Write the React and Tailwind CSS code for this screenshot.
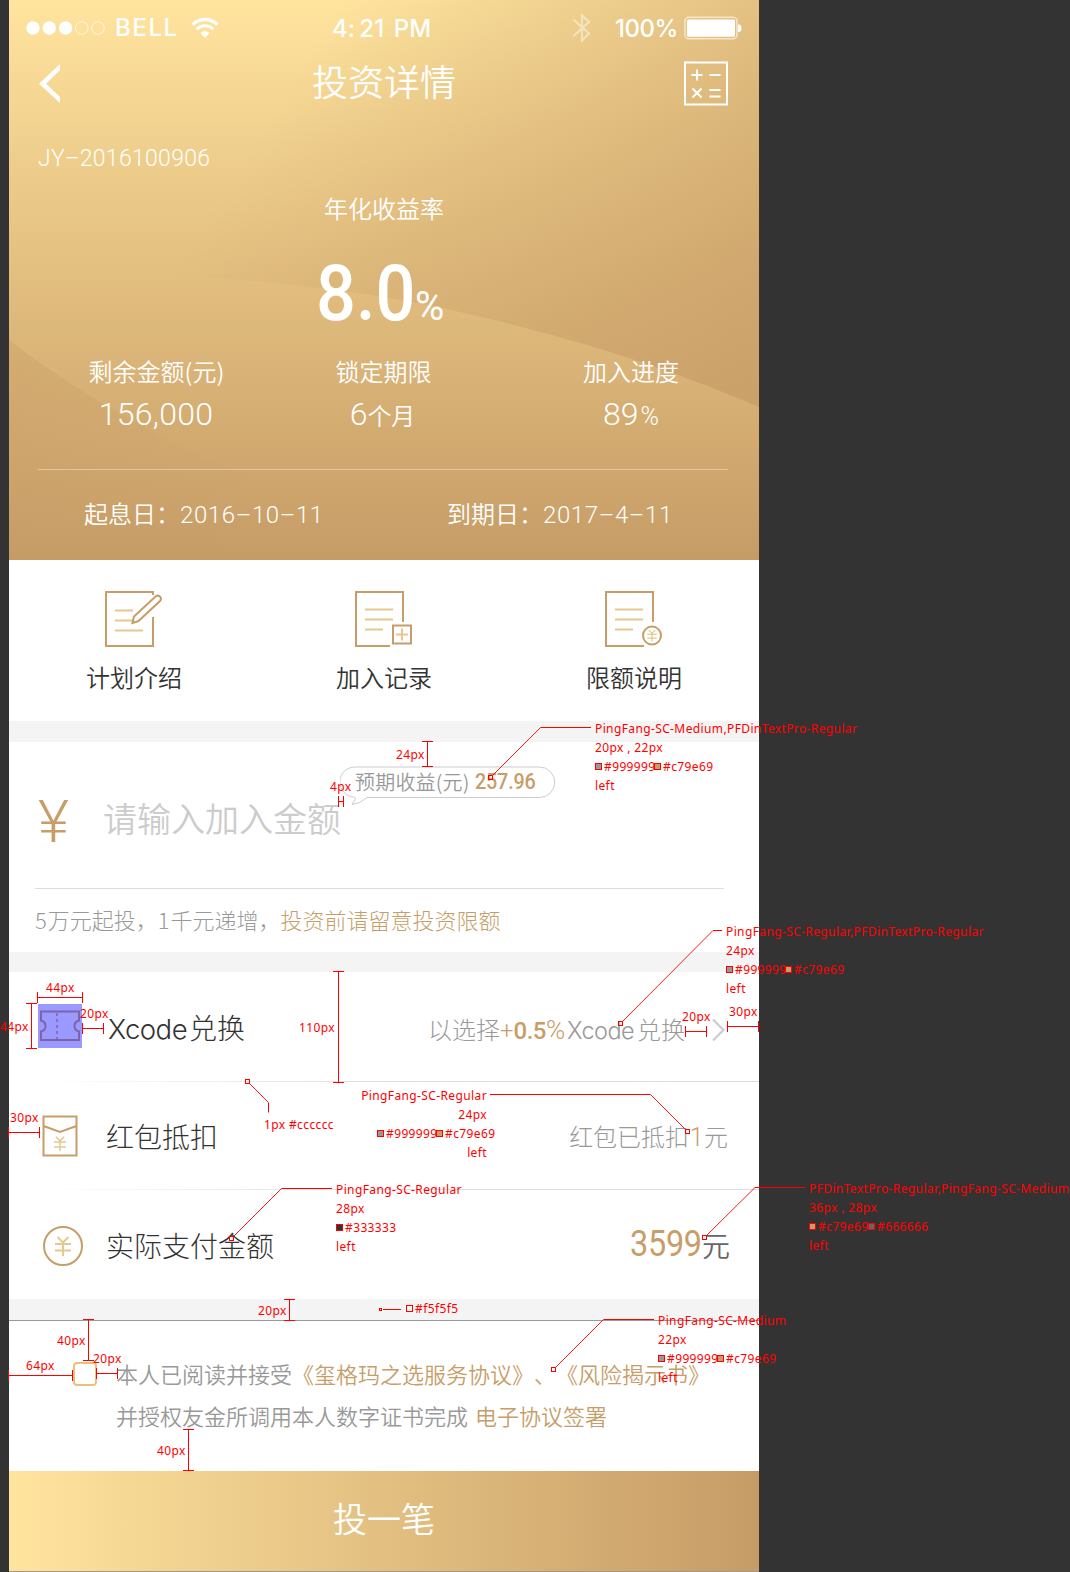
import React from "react";

const GOLD = "#c79e69";
const PALE = "#e5c88f";

const Num = ({ className = "", children }) => (
  <span className={`font-[Roboto,sans-serif] ${className}`}>{children}</span>
);

function StatusBar() {
  return (
    <div className="flex h-[56px] items-center font-[Inter,sans-serif] text-[24px] leading-[30px] font-[450]">
      <svg className="ml-[17px] h-[14px] w-[80px] shrink-0" viewBox="0 0 80 14" fill="none">
        <circle cx="7" cy="7" r="6.7" fill="#fff" />
        <circle cx="23.3" cy="7" r="6.7" fill="#fff" />
        <circle cx="39.6" cy="7" r="6.7" fill="#fff" />
        <circle cx="55.8" cy="7" r="6.3" stroke="#fff" strokeOpacity=".75" />
        <circle cx="72" cy="7" r="6.3" stroke="#fff" strokeOpacity=".75" />
      </svg>
      <span className="ml-[8px] w-[77px] shrink-0 pl-px tracking-[1.6px]">BELL</span>
      <svg className="h-[22px] w-[28px] shrink-0" viewBox="0 0 28 22" fill="none">
        <path d="M1.5 7.6C8.5.8 19.500.8 26.500 7.600" stroke="#fff" strokeWidth="3.4" />
        <path d="M5.800 12.200c4.600-4.600 11.800-4.600 16.400 0" stroke="#fff" strokeWidth="3.200" />
        <path d="M9.300 16c2.700-2.500 6.700-2.500 9.400 0L14 20.800z" fill="#fff" />
      </svg>
      <span className="ml-[112px] w-[101px] shrink-0 pt-[2px] pl-px tracking-[0.1px] whitespace-nowrap">4<span className="mr-[4px]">:</span>21<span className="ml-[3px]"> PM</span></span>
      <svg className="ml-[140px] h-[30px] w-[20px] shrink-0 opacity-45" viewBox="0 0 20 30" fill="none">
        <path d="M1.500 6.500 17 20.500 10 27.500V2.500l7 6.500L1.500 23" stroke="#fff" strokeWidth="2.200" />
      </svg>
      <span className="ml-[23px] w-[69px] shrink-0 pt-[2px] tracking-[-0.5px]">100%</span>
      <svg className="h-[24px] w-[60px] shrink-0" viewBox="0 0 60 24" fill="none">
        <rect x="1" y="1.200" width="52" height="21.600" rx="4" stroke="#fff" strokeOpacity=".6" strokeWidth="1.500" />
        <rect x="3" y="3.500" width="48" height="17.200" rx="1.500" fill="#fff" />
        <path d="M54 8.500c3 0 3.500 2 3.500 3.700S57 16 54 16z" fill="#fff" />
      </svg>
    </div>
  );
}

function Header() {
  return (
    <header className="relative h-[560px] bg-linear-to-b from-[#ffe49e] via-[#e3bf80] via-48% to-[#c69c66] text-white">
      <svg className="absolute inset-0 h-[560px] w-[750px]" viewBox="0 0 750 560">
        <defs>
          <linearGradient id="glow" gradientUnits="userSpaceOnUse" x1="290" y1="70" x2="810" y2="390">
            <stop offset="0" stopColor="#c69c66" stopOpacity="0" />
            <stop offset="1" stopColor="#c69c66" stopOpacity=".82" />
          </linearGradient>
          <linearGradient id="hill" gradientUnits="userSpaceOnUse" x1="0" y1="400" x2="260" y2="480">
            <stop offset="0" stopColor="#c69c66" stopOpacity=".35" />
            <stop offset="1" stopColor="#c69c66" stopOpacity="0" />
          </linearGradient>
        </defs>
        <path d="M0 0H750V407C640 360 540 332 438 309Q330 286 180 276H0Z" fill="url(#glow)" />
        <path d="M0 340Q130 440 300 500V560H0Z" fill="url(#hill)" />
      </svg>
      <div className="relative">
        <StatusBar />
        <div className="flex h-[60px] items-start justify-between pr-[31px] pl-[29px]">
          <svg className="mt-[8px] h-[40px] w-[24px]" viewBox="0 0 24 40" fill="none">
            <path d="M22 0v6L8 19.800 22 33v6L1 19.800z" fill="#fff" />
          </svg>
          <h1 className="-mt-px ml-[22px] text-[36px] leading-[50px] font-[350]">投资详情</h1>
          <svg className="mt-[5px] h-[45px] w-[44px]" viewBox="0 0 44 45" fill="none" stroke="#fff" strokeWidth="2">
            <path d="M1 1.500h42v42H1z" />
            <path d="M7.500 14h11M13 8.500v11M25.500 14h11M25.500 29h11M25.500 35.500h11M8.500 27.500l9 9M17.500 27.500l-9 9" />
          </svg>
        </div>
        <div className="mt-[28px] pl-[29px] leading-[30px]">
          <Num className="text-[23px] font-[350] tracking-[0.3px]">JY–2016100906</Num>
        </div>
        <div className="mt-[16px] text-center text-[24px] leading-[36px] font-[350]">年化收益率</div>
        <div className="mt-[26px] ml-[307px] flex h-[80px] items-baseline leading-[84px] whitespace-nowrap">
          <Num className="inline-block w-[99px] origin-left scale-x-[0.9] text-[78px] font-medium">8.0</Num>
          <Num className="inline-block origin-left text-[40px] font-normal">%</Num>
        </div>
        <div className="mt-[19px] grid grid-cols-3 text-center text-[24px] leading-[40px] font-[350]">
          <div className="pl-[45px]">剩余金额(元)</div>
          <div className="pr-px">锁定期限</div>
          <div className="pr-[6px]">加入进度</div>
        </div>
        <div className="mt-px grid grid-cols-3 text-center text-[24px] leading-[44px] font-[350]">
          <div className="pl-[44px]"><Num className="text-[32px] tracking-[0.3px]">156,000</Num></div>
          <div className="pr-[3px]"><Num className="text-[32px]">6</Num>个月</div>
          <div className="pr-[6px]"><Num className="text-[32px]">89</Num><Num className="ml-[2px] text-[25px]">%</Num></div>
        </div>
        <div className="mt-[30px] mr-[31px] ml-[29px] h-px bg-white/35" />
        <div className="mt-[25px] flex pl-[75px] text-[24px] leading-[36px] font-[350]">
          <div className="w-[363px]">起息日：<Num className="tracking-[0.6px]">2016–10–11</Num></div>
          <div>到期日：<Num className="tracking-[0.6px]">2017–4–11</Num></div>
        </div>
      </div>
    </header>
  );
}

const Yuan = ({ x, y, s = 1 }) => (
  <path
    transform={`translate(${x} ${y}) scale(${s})`}
    d="M-5.500 -9 0 -3.500 5.500 -9M0 -3.500V10M-8 -2H8M-8 4.500H8"
    stroke={PALE}
    strokeWidth="2"
  />
);

function Shortcuts() {
  return (
    <nav className="grid h-[161px] grid-cols-3 bg-white pt-[30px] text-[24px] font-[350] text-[#333]">
      <div className="flex flex-col items-center">
        <svg className="mr-[2px] h-[58px] w-[58px]" viewBox="0 0 58 58" fill="none" stroke={GOLD} strokeWidth="2">
          <path d="M49 5V2H2v54h47V27" />
          <path d="M11 20.500h18M11 30.500h18M11 40.500h28" stroke={PALE} />
          <path d="M28.500 33 30 26.500 51.500 6.500c3.500-2.500 7 1.500 4.500 4.500L34.500 31z" />
        </svg>
        <span className="mt-[11px] leading-[36px]">计划介绍</span>
      </div>
      <div className="flex flex-col items-center">
        <svg className="mr-[2px] h-[58px] w-[58px]" viewBox="0 0 58 58" fill="none" stroke={GOLD} strokeWidth="2">
          <path d="M49 32V2H2v54h34" />
          <path d="M11 19.500h28M11 29.500h28M11 39.500h18M42 44.500h12M48 38.500v12" stroke={PALE} />
          <path d="M39 35.500h18v18H39z" />
        </svg>
        <span className="mt-[11px] leading-[36px]">加入记录</span>
      </div>
      <div className="flex flex-col items-center">
        <svg className="mr-[2px] h-[58px] w-[58px]" viewBox="0 0 58 58" fill="none" stroke={GOLD} strokeWidth="2">
          <path d="M49 32V2H2v54h38" />
          <path d="M11 19.500h28M11 29.500h28M11 39.500h18" stroke={PALE} />
          <circle cx="48" cy="45.500" r="9" />
          <Yuan x="48" y="45.500" s={0.6} />
        </svg>
        <span className="mt-[11px] leading-[36px]">限额说明</span>
      </div>
    </nav>
  );
}

function AmountInput() {
  return (
    <section className="relative h-[210px] bg-white">
      <div className="flex h-[146px] items-center pt-[6px] pl-[28px]">
        <Num className="w-[66px] pt-[8px] pl-px text-[60px] leading-[60px] font-[350] text-[#c79e69]">¥</Num>
        <span className="text-[34px] leading-[50px] font-[350] text-[#ccc]">请输入加入金额</span>
      </div>
      <div className="mr-[35px] ml-[26px] h-px bg-[#ddd]" />
      <p className="mt-[13px] pl-[26px] text-[22px] leading-[34px] font-light text-[#999]">
        <span className="mr-px">5</span>万元起投，<span className="mr-px">1</span>千元递增，<span className="text-[#c79e69]">投资前请留意投资限额</span>
      </p>
      <div className="absolute top-[24px] left-[331px] h-[40px] w-[216px]">
        <svg className="absolute inset-0 h-[40px] w-[216px]" viewBox="0 0 216 40" fill="#fff" stroke="#ccc">
          <path d="M27 31.500H199.500a15.250 15.250 0 0 0 0-30.500H16C-4 1-5 26 11 30.500q6 1 4 3.500l-3 4.500Q20 38 27 31.500Z" />
        </svg>
        <div className="relative flex pl-[15px] text-[20px] leading-[31px] font-[350] text-[#999]">
          <span className="w-[120px] tracking-[0.2px]">预期收益(元)</span>
          <Num className="origin-left scale-x-[0.92] text-[21.5px] leading-[32px] font-medium tracking-[-0.2px] text-[#c79e69]">257.96</Num>
        </div>
      </div>
    </section>
  );
}

const Fade = () => (
  <div className="ml-[30px] h-px shrink-0 bg-linear-to-r from-[#dddddd]/0 via-[#dddddd] to-[#dddddd]" />
);

function Rows() {
  return (
    <section className="flex h-[327px] flex-col bg-white text-[28px] leading-[44px] text-[#333]">
      <div className="flex h-[109px] items-center pl-[29px]">
        <svg className="h-[44px] w-[44px] -translate-y-px" viewBox="0 0 44 44" fill="none">
          <path d="M0 0h44v44H0z" fill="#9999ff" />
          <path d="M3 7.500h38v9c-6 1.500-6 9.500 0 11v8.500H3v-8.500c6-1.500 6-9.500 0-11z" stroke="#7e63a8" strokeWidth="2" />
          <path d="M19 9v27" stroke="#7e63a8" strokeWidth="1.500" strokeDasharray="3 3" />
        </svg>
        <span className="ml-[26px] flex items-baseline pt-[2px] font-light"><span className="w-[81px] font-[Inter,sans-serif] text-[27.500px] tracking-[-0.5px]">Xcode</span><span>兑换</span></span>
        <div className="mr-[34px] ml-auto flex items-baseline pt-[6px] text-[24px] font-light text-[#999]">
          <span>以选择</span>
          <span className="w-[67px] whitespace-nowrap text-[#c79e69]"><Num>+</Num><Num className="font-medium tracking-[-0.5px]">0.5</Num><Num className="text-[26px]">%</Num></span>
          <span className="w-[70px] font-[Inter,sans-serif] text-[23.5px] tracking-[-0.5px]">Xcode</span>
          <span>兑换</span>
          <svg className="ml-[27px] h-[24px] w-[13px] self-center" viewBox="0 0 13 24" fill="none">
            <path d="M1 1.500 11.500 12 1 22.500" stroke="#ccc" strokeWidth="2.200" />
          </svg>
        </div>
      </div>
      <Fade />
      <div className="flex h-[107px] items-center pl-[33px]">
        <svg className="h-[42px] w-[36px]" viewBox="0 0 36 42" fill="none" stroke={GOLD} strokeWidth="2">
          <path d="M1.500 1.500h33v39h-33zM1.500 11 18 17l16.500-6" />
          <Yuan x="18" y="28.500" s={0.75} />
        </svg>
        <span className="ml-[28px] font-light">红包抵扣</span>
        <div className="mr-[31px] ml-auto pt-[3px] text-[24px] font-light text-[#999]">
          红包已抵扣<Num className="mx-[0.5px] text-[25px] text-[#c79e69]">1</Num>元
        </div>
      </div>
      <Fade />
      <div className="flex h-[109px] items-center pt-[3px] pl-[34px]">
        <svg className="h-[40px] w-[40px]" viewBox="0 0 40 40" fill="none" stroke={GOLD} strokeWidth="2">
          <circle cx="20" cy="20" r="19" />
          <Yuan x="20" y="20" />
        </svg>
        <span className="ml-[23px] pb-[2px] font-light">实际支付金额</span>
        <div className="mr-[29px] ml-auto flex items-center pb-[4px] font-[350] text-[#666]">
          <Num className="mr-[-8px] origin-left scale-x-[0.9] text-[36px] font-normal tracking-[-0.3px] text-[#c79e69]">3599</Num>
          <span className="pt-[2px]">元</span>
        </div>
      </div>
    </section>
  );
}

function Agreement() {
  return (
    <section className="flex h-[151px] border-t border-[#999] bg-white pt-[31px] pl-[64px] text-[22px] leading-[42px] font-[350] text-[#999]">
      <div className="mt-[10px] h-[24px] w-[24px] shrink-0 rounded-[4px] border-2 border-[#e8c27c] bg-white" />
      <div className="ml-[19px] [text-spacing-trim:space-all] whitespace-nowrap">
        <p>本人已阅读并接受<span className="text-[#c79e69]">《玺格玛之选服务协议》、《风险揭示书》</span></p>
        <p>并授权友金所调用本人数字证书完成<span className="ml-[7px] text-[#c79e69]">电子协议签署</span></p>
      </div>
    </section>
  );
}

const SPEC_LINES = [
  "M427.500 741.500V766.500M422 741.500h11M422 766.500h11",
  "M338.500 801.500H343.500M338.500 796v11M343.500 796v11",
  "M37.500 997.500H82.500M37.500 992v11M82.500 992v11",
  "M31.500 1003.500V1048.500M26 1003.500h11M26 1048.500h11",
  "M82.500 1028.500H103.500M82.500 1023v11M103.500 1023v11",
  "M338.500 971.500V1082.500M333 971.500h11M333 1082.500h11",
  "M685.500 1031.500H706.500M685.500 1026v11M706.500 1026v11",
  "M727.500 1026.500H758.500M727.500 1021v11M758.500 1021v11",
  "M8.500 1132.500H39.500M8.500 1127v11M39.500 1127v11",
  "M289.500 1299.500V1320.500M284 1299.500h11M284 1320.500h11",
  "M88.500 1319.500V1360.500M83 1319.500h11M83 1360.500h11",
  "M8 1375.500H72.500M8.500 1370v11M72.500 1370v11",
  "M96.500 1373.500H117.500M96.500 1368v11M117.500 1368v11",
  "M188.500 1429.500V1470.500M183 1429.500h11M183 1470.500h11",
  "M591 727.500H540.500M722 930.500H713M268.500 1102.500V1112.500M490 1094.500H650.500",
  "M332 1188.500H281.500M805 1187.500H755M654 1319.500H603.500M383 1309.500H401",
];

const SPEC_LEADERS =
  "M540.500 727.500 493 775M713 930.500 622.500 1021.500M249.500 1083.500l19 19M650.500 1094.500 685.500 1129.500M281.500 1188.500 233.500 1236.500M755 1187.500 706.500 1235.500M603.500 1319.500 555.500 1367.500";

const SPEC_POINTS = [
  [490.5, 777.5], [620.5, 1023.5], [247.5, 1081.5], [687.5, 1131.5], [231.5, 1238.5], [704.5, 1237.5], [553.5, 1369.5],
];

const MEASURES = [
  ["left-[396px] top-[745px]", "24px"],
  ["left-[330px] top-[777px]", "4px"],
  ["left-[46px] top-[978px]", "44px"],
  ["left-[0px] top-[1017px]", "44px"],
  ["left-[80px] top-[1004px]", "20px"],
  ["left-[299px] top-[1018px]", "110px"],
  ["left-[729px] top-[1002px]", "30px"],
  ["left-[682px] top-[1007px]", "20px"],
  ["left-[10px] top-[1108px]", "30px"],
  ["left-[264px] top-[1115px]", "1px #cccccc"],
  ["left-[258px] top-[1301px]", "20px"],
  ["left-[57px] top-[1331px]", "40px"],
  ["left-[93px] top-[1349px]", "20px"],
  ["left-[26px] top-[1356px]", "64px"],
  ["left-[157px] top-[1441px]", "40px"],
];

const NOTES = [
  { at: "left-[595px] top-[719px]", font: "PingFang-SC-Medium,PFDinTextPro-Regular", size: "20px , 22px", colors: [["bg-[#999999]", "#999999"], ["bg-[#c79e69]", "#c79e69"]] },
  { at: "left-[726px] top-[922px]", font: "PingFang-SC-Regular,PFDinTextPro-Regular", size: "24px", colors: [["bg-[#999999]", "#999999"], ["bg-[#c79e69]", "#c79e69"]] },
  { at: "left-[361px] top-[1086px] w-[126px] items-end", font: "PingFang-SC-Regular", size: "24px", colors: [["bg-[#999999]", "#999999"], ["bg-[#c79e69]", "#c79e69"]], shift: "-mr-[8px]" },
  { at: "left-[336px] top-[1180px]", font: "PingFang-SC-Regular", size: "28px", colors: [["bg-[#333333]", "#333333"]] },
  { at: "left-[809px] top-[1179px]", font: "PFDinTextPro-Regular,PingFang-SC-Medium", size: "36px , 28px", colors: [["bg-[#c79e69]", "#c79e69"], ["bg-[#666666]", "#666666"]] },
  { at: "left-[658px] top-[1311px]", font: "PingFang-SC-Medium", size: "22px", colors: [["bg-[#999999]", "#999999"], ["bg-[#c79e69]", "#c79e69"]] },
];

const Swatch = ({ fill }) => <i className={`block h-[7px] w-[7px] shrink-0 border border-[#ff0000] ${fill}`} />;

function Note({ at, font, size, colors, shift = "" }) {
  return (
    <div className={`absolute flex flex-col ${at}`}>
      <span>{font}</span>
      <span>{size}</span>
      <div className={`flex items-center ${shift}`}>
        {colors.map(([fill, label]) => (
          <div key={label} className="flex w-[59px] shrink-0 items-center gap-[2px]">
            <Swatch fill={fill} />
            <span>{label}</span>
          </div>
        ))}
      </div>
      <span>left</span>
    </div>
  );
}

function SpecOverlay() {
  return (
    <div className="pointer-events-none absolute inset-0 overflow-hidden font-['Noto_Sans',sans-serif] text-[12px] leading-[19px] tracking-[0.38px] whitespace-nowrap text-[#ff0000]">
      <svg className="absolute inset-0 h-[1572px] w-[1070px]" viewBox="0 0 1070 1572" fill="none" stroke="#ff0000">
        {SPEC_LINES.map((d) => (
          <path key={d} d={d} />
        ))}
        <path d={SPEC_LEADERS} strokeWidth=".9" />
        {SPEC_POINTS.map(([x, y]) => (
          <rect key={x} x={x - 2} y={y - 2} width="4" height="4" />
        ))}
        <rect x="379.500" y="1308.500" width="2" height="2" />
      </svg>
      {MEASURES.map(([at, label]) => (
        <span key={at} className={`absolute ${at}`}>{label}</span>
      ))}
      <div className="absolute top-[1299px] left-[406px] flex items-center gap-[2px]">
        <Swatch fill="bg-[#f5f5f5]" />
        <span>#f5f5f5</span>
      </div>
      {NOTES.map((n) => (
        <Note key={n.at} {...n} />
      ))}
    </div>
  );
}

export default function App() {
  return (
    <div className="relative h-[1572px] w-[1070px] overflow-hidden bg-[#333] pl-[9px] font-['Noto_Sans_CJK_SC',sans-serif]">
      <main className="flex w-[750px] flex-col">
        <Header />
        <Shortcuts />
        <div className="h-[21px] bg-[#f4f4f4]" />
        <AmountInput />
        <div className="h-[20px] bg-[#f4f4f4]" />
        <Rows />
        <div className="h-[21px] bg-[#f4f4f4]" />
        <Agreement />
        <button className="h-[101px] border-b border-[#999] bg-linear-to-r from-[#ffe49e] to-[#c69c66] pb-[7px] text-[34px] font-[350] text-white">
          投一笔
        </button>
      </main>
      <SpecOverlay />
    </div>
  );
}
